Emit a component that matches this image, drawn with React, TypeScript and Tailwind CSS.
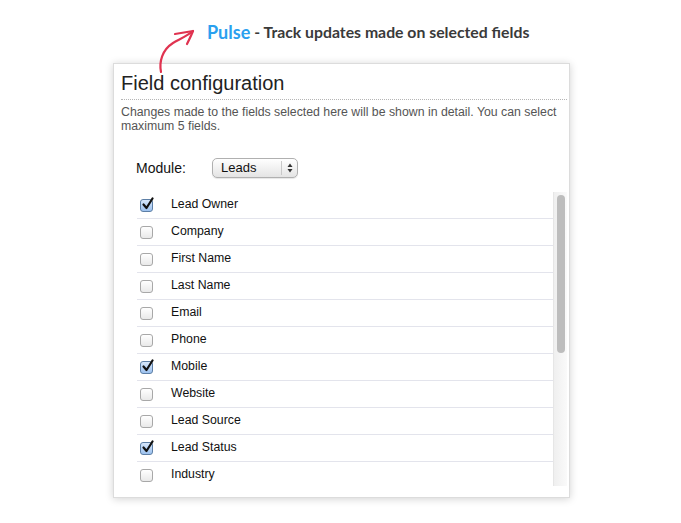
import React from "react";

const fields: { name: string; checked: boolean }[] = [
  { name: "Lead Owner", checked: true },
  { name: "Company", checked: false },
  { name: "First Name", checked: false },
  { name: "Last Name", checked: false },
  { name: "Email", checked: false },
  { name: "Phone", checked: false },
  { name: "Mobile", checked: true },
  { name: "Website", checked: false },
  { name: "Lead Source", checked: false },
  { name: "Lead Status", checked: true },
  { name: "Industry", checked: false },
];

function Box({ checked }: { checked: boolean }) {
  if (checked) {
    return (
      <div className="relative w-[13px] h-[13px] rounded-[3px] border border-[#5d7fa6] bg-gradient-to-b from-[#d7e7fb] to-[#9cc1ee]">
        <svg className="absolute left-[0px] top-[-3px]" width="14" height="14" viewBox="0 0 14 14">
          <path d="M2.5 7.5 L5.5 11 L11.5 1.5" fill="none" stroke="#111" strokeWidth="2.2" strokeLinecap="round" strokeLinejoin="round" />
        </svg>
      </div>
    );
  }
  return <div className="w-[13px] h-[13px] rounded-[3px] border border-[#a8a8a8] bg-gradient-to-b from-[#ffffff] to-[#e9e9e9]" />;
}

export default function App() {
  return (
    <div className="w-[681px] h-[523px] bg-white relative" style={{ fontFamily: '"Liberation Sans", Arial, sans-serif' }}>
      <div className="flex items-end h-[48px] pl-[207px] pb-[7px]" style={{ fontFamily: "Lato, sans-serif" }}>
        <span className="text-[18px] font-bold text-[#2aa0ef] leading-none">Pulse</span>
        <span className="text-[15.8px] font-bold text-[#3a3a3a] leading-none ml-[4px] mb-[1px]">- Track updates made on selected fields</span>
      </div>
      <svg className="absolute left-[150px] top-[22px]" width="50" height="55" viewBox="0 0 50 55">
        <path d="M11 50 C 9 40, 12 28, 23 21 C 30 17, 37 14, 43 9" fill="none" stroke="#e03350" strokeWidth="2.2" strokeLinecap="round" />
        <path d="M25 12 C 31 11, 37 10, 43 9 C 41 14, 39 18, 37 22" fill="none" stroke="#e03350" strokeWidth="2.2" strokeLinecap="round" strokeLinejoin="round" />
      </svg>
      <div className="ml-[113px] mt-[15px] w-[457px] h-[435px] bg-white border border-[#dcdcdc] shadow-[0_1px_8px_rgba(0,0,0,0.18)] flex flex-col pl-[7px] pr-[2px] pt-[7px]">
        <div className="text-[20px] leading-[24px] text-[#222] pb-[4px] border-b border-dotted border-[#b5b5b5]">Field configuration</div>
        <div className="text-[12.3px] leading-[14px] text-[#555] mt-[5px] pr-[8px]">
          Changes made to the fields selected here will be shown in detail. You can select maximum 5 fields.
        </div>
        <div className="flex items-center mt-[25px] ml-[15px] h-[20px]">
          <span className="text-[14px] text-[#111] w-[76px]">Module:</span>
          <div className="w-[86px] h-[20px] rounded-[5px] border border-[#b0b0b0] bg-gradient-to-b from-[#ffffff] to-[#e4e4e4] shadow-[0_1px_1px_rgba(0,0,0,0.1)] flex items-center">
            <span className="flex-1 text-[13px] text-[#111] pl-[8px]">Leads</span>
            <div className="w-[16px] h-[14px] border-l border-[#c8c8c8] flex items-center justify-center">
              <svg width="6" height="10" viewBox="0 0 6 10">
                <path d="M0.5 4 L3 0.5 L5.5 4 Z" fill="#333" />
                <path d="M0.5 6 L3 9.5 L5.5 6 Z" fill="#333" />
              </svg>
            </div>
          </div>
        </div>
        <div className="flex ml-[16px] mt-[14px] h-[294px]">
          <div className="flex-1 overflow-hidden">
            {fields.map((f) => (
              <div key={f.name} className="h-[27px] flex items-center border-b border-[#e3e4ec]">
                <div className="w-[34px] pl-[3px] flex items-center"><Box checked={f.checked} /></div>
                <span className="text-[12.3px] text-[#111] mt-[-2px]">{f.name}</span>
              </div>
            ))}
          </div>
          <div className="w-[14px] bg-gradient-to-r from-[#efefef] to-[#fafafa] border-l border-[#e6e6e6] pt-[3px] flex justify-center">
            <div className="w-[8px] h-[158px] rounded-full bg-[#bdbdbd]" />
          </div>
        </div>
      </div>
    </div>
  );
}
